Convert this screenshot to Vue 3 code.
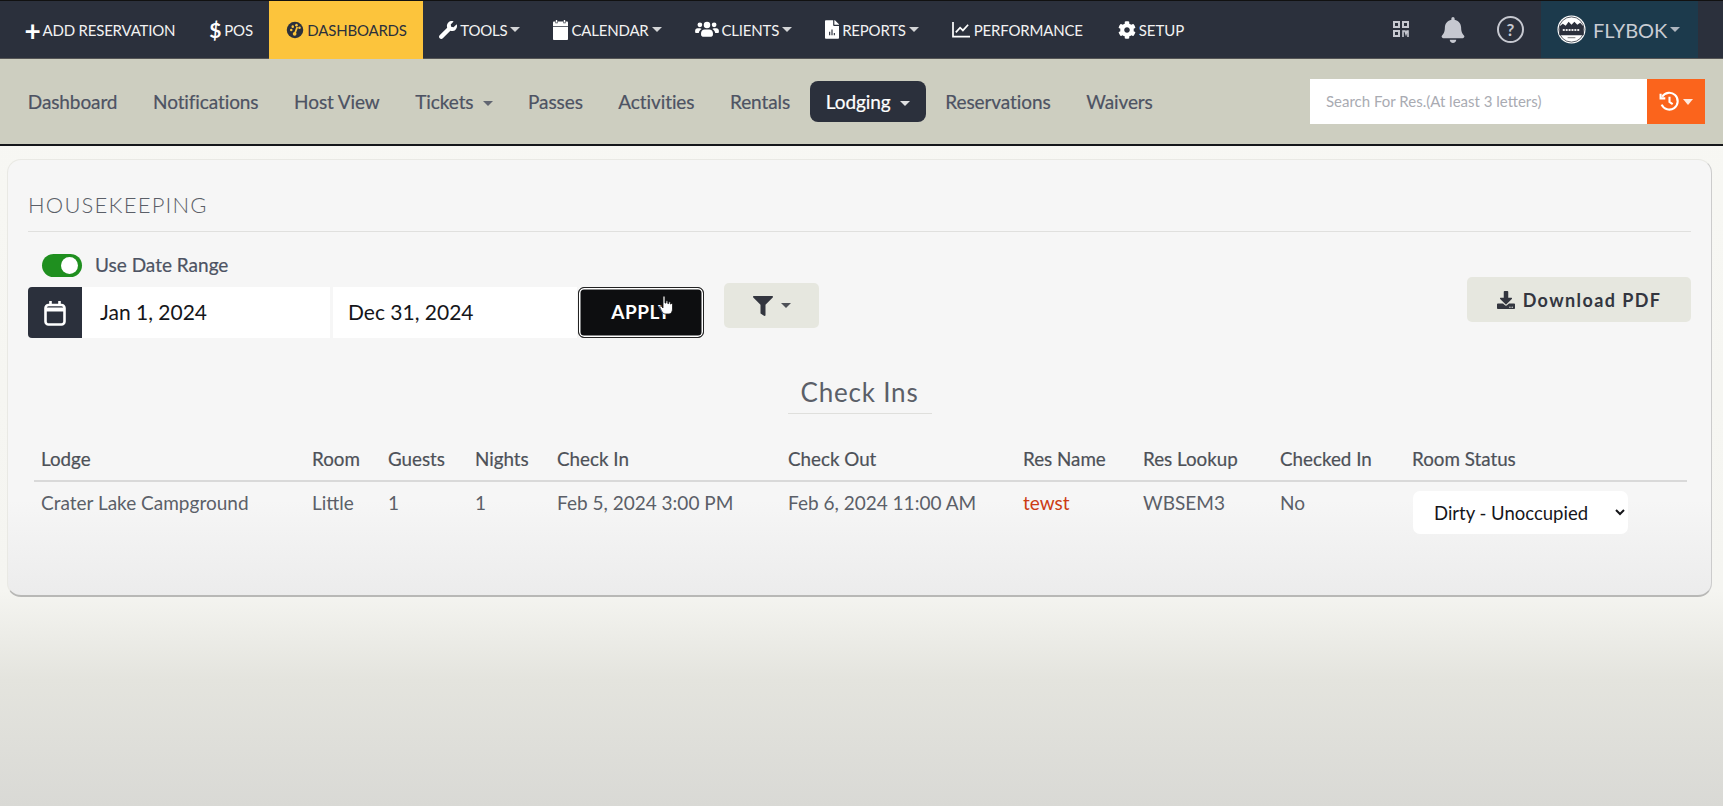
<script setup>
import { ref } from 'vue'

const useRange = ref(true)
const status = ref('Dirty - Unoccupied')

const paths = {
  wrench: 'M507.73 109.1c-2.24-9.03-13.54-12.09-20.12-5.51l-74.36 74.36-67.88-11.31-11.31-67.88 74.36-74.36c6.62-6.62 3.43-17.9-5.66-20.16-47.38-11.74-99.55.91-136.58 37.93-39.64 39.64-50.55 97.1-34.05 147.2L18.74 402.76c-24.99 24.99-24.99 65.51 0 90.5 24.99 24.99 65.51 24.99 90.5 0l213.21-213.21c50.12 16.71 107.47 5.68 147.37-34.22 37.07-37.07 49.7-89.32 37.91-136.73z',
  calendar: 'M96 0h48v64H96zM368 0h48v64h-48zM32 40h48v40h80V40h192v40h80V40h48c18 0 32 14 32 32v84H0V72c0-18 14-32 32-32zM0 172h512v308c0 18-14 32-32 32H32c-18 0-32-14-32-32z',
  users: 'M128 64a64 64 0 1 1 0 128 64 64 0 0 1 0-128zM512 64a64 64 0 1 1 0 128 64 64 0 0 1 0-128zM320 48a88 88 0 1 1 0 176 88 88 0 0 1 0-176zM64 224h64c18 0 34 7 46 19-40 22-69 62-75 109H32c-18 0-32-14-32-32v-32c0-35 29-64 64-64zM512 224h64c35 0 64 29 64 64v32c0 18-14 32-32 32h-67c-6-47-35-87-75-109 12-12 28-19 46-19zM256 256h128c53 0 96 43 96 96v48c0 26-22 48-48 48H208c-26 0-48-22-48-48v-48c0-53 43-96 96-96z',
  report: 'M224 136V0H24C10.700 0 0 10.700 0 24v464c0 13.300 10.700 24 24 24h336c13.300 0 24-10.700 24-24V160H248c-13.200 0-24-10.800-24-24zM144 416h-32v-96h32zm64 0h-32V256h32zm64 0h-32v-64h32zM384 122v6H256V0h6c6.400 0 12.500 2.500 17 7l98 98c4.500 4.500 7 10.600 7 17z',
  cog: 'M487.4 315.7l-42.6-24.6c4.3-23.2 4.3-47 0-70.2l42.6-24.6c4.9-2.8 7.1-8.6 5.5-14-11.1-35.6-30-67.8-54.7-94.6-3.8-4.1-10-5.1-14.8-2.3L380.8 110c-17.9-15.4-38.5-27.3-60.8-35.1V25.8c0-5.6-3.9-10.5-9.4-11.7-36.7-8.2-74.3-7.8-109.2 0-5.5 1.2-9.4 6.1-9.4 11.7V75c-22.2 7.9-42.8 19.8-60.8 35.1L88.7 85.5c-4.9-2.8-11-1.9-14.8 2.3-24.7 26.7-43.6 58.9-54.7 94.6-1.7 5.4.6 11.2 5.5 14L67.3 221c-4.3 23.2-4.3 47 0 70.2l-42.6 24.6c-4.9 2.8-7.1 8.6-5.5 14 11.1 35.6 30 67.8 54.7 94.6 3.8 4.1 10 5.1 14.8 2.3l42.6-24.6c17.9 15.4 38.5 27.3 60.8 35.1v49.2c0 5.6 3.9 10.5 9.4 11.7 36.7 8.2 74.3 7.8 109.2 0 5.5-1.2 9.4-6.1 9.4-11.7v-49.2c22.2-7.9 42.8-19.8 60.8-35.1l42.6 24.6c4.9 2.8 11 1.9 14.8-2.3 24.7-26.7 43.6-58.9 54.7-94.6 1.5-5.5-.7-11.3-5.6-14.1zM256 336c-44.1 0-80-35.9-80-80s35.9-80 80-80 80 35.9 80 80-35.9 80-80 80z',
  bell: 'M224 512c35.32 0 63.97-28.65 63.97-64H160.03c0 35.35 28.65 64 63.97 64zm215.39-149.71c-19.32-20.76-55.47-51.99-55.47-154.29 0-77.7-54.48-139.9-127.94-155.16V32c0-17.67-14.32-32-31.98-32s-31.98 14.33-31.98 32v20.84C118.56 68.1 64.08 130.3 64.08 208c0 102.3-36.15 133.53-55.47 154.29-6 6.45-8.66 14.16-8.61 21.71.11 16.4 12.98 32 32.1 32h383.8c19.12 0 32-15.6 32.1-32 .05-7.55-2.61-15.27-8.61-21.71z',
  filter: 'M487.976 0H24.028C2.71 0-8.047 25.866 7.058 40.971L192 225.941V432c0 7.831 3.821 15.17 10.237 19.662l80 55.98C298.02 518.69 320 507.493 320 487.98V225.941l184.947-184.97C520.021 25.896 509.338 0 487.976 0z',
  download: 'M216 0h80c13.3 0 24 10.7 24 24v168h87.7c17.8 0 26.7 21.5 14.1 34.1L269.7 378.3c-7.5 7.5-19.8 7.5-27.3 0L90.1 226.1c-12.6-12.6-3.7-34.1 14.1-34.1H192V24c0-13.3 10.7-24 24-24zm296 376v112c0 13.3-10.7 24-24 24H24c-13.3 0-24-10.7-24-24V376c0-13.3 10.7-24 24-24h146.7l49 49c20.1 20.1 52.5 20.1 72.6 0l49-49H488c13.3 0 24 10.7 24 24zm-124 88c0-11-9-20-20-20s-20 9-20 20 9 20 20 20 20-9 20-20zm64 0c0-11-9-20-20-20s-20 9-20 20 9 20 20 20 20-9 20-20z'
}

const subLinks = [
  { label: 'Dashboard' },
  { label: 'Notifications' },
  { label: 'Host View' },
  { label: 'Tickets', caret: true },
  { label: 'Passes' },
  { label: 'Activities' },
  { label: 'Rentals' },
  { label: 'Lodging', caret: true, active: true },
  { label: 'Reservations' },
  { label: 'Waivers' }
]

// column widths measured off the reference
const columns = [
  { label: 'Lodge', width: 271 },
  { label: 'Room', width: 76 },
  { label: 'Guests', width: 87 },
  { label: 'Nights', width: 82 },
  { label: 'Check In', width: 231 },
  { label: 'Check Out', width: 235 },
  { label: 'Res Name', width: 120 },
  { label: 'Res Lookup', width: 137 },
  { label: 'Checked In', width: 132 },
  { label: 'Room Status', width: 282 }
]
</script>

<template>
  <div class="page">
    <header class="topbar">
      <nav class="mainnav">
        <a class="item first"><span class="plus">+</span>ADD RESERVATION</a>
        <a class="item"><span class="dollar">$</span>POS</a>
        <a class="item active">
          <svg class="ic" viewBox="0 0 24 24" width="18" height="18">
            <circle cx="12" cy="12" r="11" fill="#2b303c" />
            <circle cx="7" cy="12" r="1.7" fill="#fcc43c" />
            <circle cx="9" cy="7.500" r="1.700" fill="#fcc43c" />
            <circle cx="14" cy="5.500" r="1.700" fill="#fcc43c" />
            <circle cx="18" cy="9" r="1.700" fill="#fcc43c" />
            <path d="M15 8l-3 8" stroke="#fcc43c" stroke-width="2.400" />
            <circle cx="11.500" cy="17" r="2.500" fill="#fcc43c" />
          </svg>
          DASHBOARDS
        </a>
        <a class="item">
          <svg class="ic" viewBox="0 0 512 512" width="18" height="18"><path :d="paths.wrench" fill="#fff" /></svg>
          TOOLS<i class="caret"></i>
        </a>
        <a class="item">
          <svg class="ic" viewBox="0 0 512 512" width="15" height="20" preserveAspectRatio="none"><path :d="paths.calendar" fill="#fff" /></svg>
          CALENDAR<i class="caret"></i>
        </a>
        <a class="item">
          <svg class="ic" viewBox="0 0 640 512" width="24" height="19"><path :d="paths.users" fill="#fff" /></svg>
          CLIENTS<i class="caret"></i>
        </a>
        <a class="item">
          <svg class="ic" viewBox="0 0 384 512" width="14" height="19"><path :d="paths.report" fill="#fff" /></svg>
          REPORTS<i class="caret"></i>
        </a>
        <a class="item">
          <svg class="ic" viewBox="0 0 20 18" width="19" height="17">
            <path d="M1 1v15.500h18" fill="none" stroke="#fff" stroke-width="1.800" />
            <path d="M4 12l4.500-5 3 3L17 4" fill="none" stroke="#fff" stroke-width="1.800" />
          </svg>
          PERFORMANCE
        </a>
        <a class="item setup">
          <svg class="ic" viewBox="0 0 512 512" width="18" height="18"><path :d="paths.cog" fill="#fff" /></svg>
          SETUP
        </a>
      </nav>
      <div class="tools">
        <svg class="qr" viewBox="0 0 16 17" width="16" height="17" fill="none" stroke="#c6c8d0" stroke-width="2">
          <rect x="1" y="1" width="5" height="5" />
          <rect x="10" y="1" width="5" height="5" />
          <rect x="1" y="10" width="5" height="5" />
          <path d="M10 16v-6h2l1 3 1-3h1v6" stroke-width="1.600" />
        </svg>
        <svg class="bell" viewBox="0 0 448 512" width="24" height="26"><path :d="paths.bell" fill="#c6c8d0" /></svg>
        <span class="help">?</span>
        <div class="account">
          <svg viewBox="0 0 30 30" width="29" height="29">
            <circle cx="15" cy="15" r="14.500" fill="#fff" />
            <circle cx="15" cy="15" r="13" fill="none" stroke="#2b303c" stroke-width=".8" />
            <path d="M2.500 12l3.500-3 3 2 3-4 3 3 3-3 3 3 3-2 3.500 4v9h-25z" fill="#2b303c" />
            <path d="M6 15.500h18" stroke="#e8e8e8" stroke-width="2" stroke-dasharray="2 1" />
            <path d="M11 23.500h8" stroke="#777" stroke-width="1" />
          </svg>
          <span>FLYBOK</span><i class="caret"></i>
        </div>
      </div>
    </header>

    <div class="subnav">
      <nav class="sublinks">
        <a v-for="link in subLinks" :key="link.label" class="sublink" :class="{ on: link.active }">
          {{ link.label }}<i v-if="link.caret" class="caret big"></i>
        </a>
      </nav>
      <div class="search">
        <input type="text" placeholder="Search For Res.(At least 3 letters)" />
        <button class="history">
          <svg viewBox="0 0 20 20" width="21" height="21" fill="none" stroke="#fff" stroke-width="2">
            <path d="M3 5.500A8 8 0 1 1 2.500 13" />
            <path d="M1.500 2.500V7H6" />
            <path d="M10 5.500V10.500l3 2" />
          </svg>
          <i class="caret big"></i>
        </button>
      </div>
    </div>

    <main class="card">
      <h1 class="title">HOUSEKEEPING</h1>

      <div class="toolbar">
        <div class="range">
          <label class="switch-row" @click="useRange = !useRange">
            <span class="switch" :class="{ off: !useRange }"><span class="knob"></span></span>
            Use Date Range
          </label>
          <div class="dates">
            <span class="cal">
              <svg viewBox="0 0 22 26" width="22" height="26" fill="none" stroke="#fff" stroke-width="2.600">
                <rect x="1.500" y="5" width="19" height="19.500" rx="3" />
                <path d="M1.500 9.500h19" stroke-width="4" />
                <path d="M6.500 1v5M15.500 1v5" />
              </svg>
            </span>
            <input class="date one" type="text" value="Jan 1, 2024" />
            <input class="date two" type="text" value="Dec 31, 2024" />
            <button class="apply">
              APPLY
              <svg class="hand" viewBox="0 0 14 20" width="14" height="20">
                <path d="M4 2c0-1.300 2-1.300 2 0v6l1 .1V6.500c0-1 1.800-1 1.800 0V8.500l.9.1V7.500c0-1 1.700-1 1.700 0v1.500l.6.100c0-.8 1.500-.8 1.500.2V14c0 2.500-1.500 5-3.500 5H6c-1.500 0-2.500-1.500-3.500-3L.8 12.500c-.6-1.300.9-2.200 1.700-1L4 13z" fill="#fff" stroke="#111" stroke-width=".8" />
              </svg>
            </button>
          </div>
        </div>
        <button class="filter">
          <svg viewBox="0 0 512 512" width="20" height="20"><path :d="paths.filter" fill="#33363f" /></svg>
          <i class="caret dark"></i>
        </button>
        <button class="pdf">
          <svg viewBox="0 0 512 512" width="18" height="18"><path :d="paths.download" fill="#33363f" /></svg>
          Download PDF
        </button>
      </div>

      <h2 class="section">Check Ins</h2>

      <table class="grid">
        <colgroup>
          <col v-for="c in columns" :key="c.label" :style="{ width: c.width + 'px' }" />
        </colgroup>
        <thead>
          <tr>
            <th v-for="c in columns" :key="c.label">{{ c.label }}</th>
          </tr>
        </thead>
        <tbody>
          <tr>
            <td>Crater Lake Campground</td>
            <td>Little</td>
            <td>1</td>
            <td>1</td>
            <td>Feb 5, 2024 3:00 PM</td>
            <td>Feb 6, 2024 11:00 AM</td>
            <td><a class="res">tewst</a></td>
            <td>WBSEM3</td>
            <td>No</td>
            <td>
              <select v-model="status" class="status">
                <option>Dirty - Unoccupied</option>
                <option>Clean - Unoccupied</option>
                <option>Occupied</option>
              </select>
            </td>
          </tr>
        </tbody>
      </table>
    </main>
  </div>
</template>

<style scoped>
.page {
  height: 806px;
  overflow: hidden;
  font-family: Lato, "Open Sans", sans-serif;
  background: linear-gradient(#f8f8f4 0, #f5f5f1 590px, #e4e4de 680px, #d9d9d5 806px);
}
.topbar {
  height: 59px;
  display: flex;
  justify-content: space-between;
  background: #2b303c;
  border-top: 1px solid #111;
  box-sizing: border-box;
  border-bottom: 1px solid #555;
}
.mainnav {
  display: flex;
  padding-left: 8px;
}
.item {
  display: flex;
  align-items: center;
  padding: 0 16.500px;
  color: #f2f2f2;
  font-size: 15px;
  letter-spacing: -0.2px;
  white-space: nowrap;
}
.item.first {
  padding-right: 17.500px;
}
.item.active {
  background: #fcc43c;
  color: #2b303c;
  padding: 0 16px 0 17px;
  margin: 0 0 -1px;
}
.item.setup {
  padding-left: 18.500px;
  letter-spacing: 0;
}
.plus {
  font-size: 28px;
  font-weight: 700;
  color: #fff;
  margin-right: 2px;
  line-height: 1;
}
.dollar {
  font-size: 21px;
  font-weight: 700;
  color: #fff;
  margin-right: 3px;
}
.ic {
  margin-right: 3px;
  flex: none;
}
.caret {
  display: inline-block;
  width: 0;
  height: 0;
  margin-left: 3px;
  border-top: 5px solid currentColor;
  border-left: 5px solid transparent;
  border-right: 5px solid transparent;
  opacity: .85;
}
.caret.big {
  margin-left: 9px;
  vertical-align: 3px;
}
.caret.dark {
  color: #33363f;
  margin-left: 8px;
}
.tools {
  display: flex;
  align-items: center;
  padding-right: 25px;
}
.qr {
  margin-right: 32px;
}
.bell {
  margin-right: 32px;
}
.help {
  width: 23px;
  height: 23px;
  border: 2px solid #c6c8d0;
  border-radius: 50%;
  color: #c6c8d0;
  font-size: 17px;
  font-weight: 700;
  text-align: center;
  line-height: 23px;
  margin-right: 17px;
}
.account {
  width: 157px;
  height: 100%;
  box-sizing: border-box;
  padding-left: 16px;
  display: flex;
  align-items: center;
  background: #1c3a4c;
  color: #c9ccd3;
  font-size: 20px;
}
.account svg {
  margin-right: 7px;
}
.subnav {
  height: 87px;
  display: flex;
  justify-content: space-between;
  align-items: center;
  box-sizing: border-box;
  padding: 0 18px 0 10px;
  background: #cdcec0;
  border-bottom: 2px solid #15161a;
}
.sublinks {
  display: flex;
  align-items: center;
}
.sublink {
  height: 41px;
  box-sizing: border-box;
  padding: 0 17.800px;
  color: #4d5363;
  font-size: 19px;
  line-height: 41px;
  border-radius: 8px;
  letter-spacing: -0.1px;
  -webkit-text-stroke: .2px currentColor;
  white-space: nowrap;
}
.sublink.on {
  background: #2b303c;
  color: #fff;
  padding: 0 16px;
  margin: 0 2px;
}
.search {
  display: flex;
  height: 45px;
}
.search input {
  width: 337px;
  box-sizing: border-box;
  border: 0;
  outline: 0;
  padding: 0 16px 2px;
  background: #fff;
  font: 15px Lato, sans-serif;
}
.search input::placeholder {
  color: #a9abb2;
}
.history {
  width: 58px;
  border: 0;
  background: #fb641c;
  color: #fff;
  display: flex;
  align-items: center;
  justify-content: center;
  padding: 0;
}
.history .caret {
  margin-left: 3px;
  border-top-width: 6px;
}
.card {
  margin: 13px 11px 0 7px;
  height: 438px;
  box-sizing: border-box;
  padding: 33px 20px 0;
  background: linear-gradient(#f6f6f6 0, #f6f6f6 340px, #ececec 100%);
  border: 1px solid #e9e9e4;
  border-bottom: 2px solid #b8b8b6;
  border-right-color: #ccc;
  border-radius: 14px;
}
.title {
  margin: 0;
  padding-bottom: 14px;
  border-bottom: 1px solid #e0e0de;
  color: #5b5f68;
  font-size: 22px;
  font-weight: 300;
  letter-spacing: 1.200px;
  line-height: 24px;
}
.toolbar {
  display: flex;
  align-items: flex-start;
  margin-top: 21px;
}
.range {
  width: 676px;
}
.switch-row {
  display: flex;
  align-items: center;
  height: 24px;
  padding-left: 14px;
  color: #4d5363;
  font-size: 19px;
  line-height: 22px;
  -webkit-text-stroke: .2px currentColor;
  cursor: pointer;
}
.switch {
  width: 40px;
  height: 23px;
  border-radius: 12px;
  background: #1f8f1f;
  margin-right: 13px;
  position: relative;
}
.switch.off {
  background: #aaa;
}
.knob {
  position: absolute;
  right: 4px;
  top: 3px;
  width: 17px;
  height: 17px;
  border-radius: 50%;
  background: #fff;
}
.dates {
  display: flex;
  height: 51px;
  margin-top: 10px;
}
.cal {
  width: 54px;
  flex: none;
  display: flex;
  align-items: center;
  justify-content: center;
  background: #2b303c;
  border-radius: 4px 0 0 4px;
}
.date {
  box-sizing: border-box;
  border: 0;
  outline: 0;
  background: #fff;
  color: #15161a;
  font: 21px Lato, sans-serif;
  padding: 0 17px 3px 18px;
  height: 100%;
  min-width: 0;
}
.date.one {
  width: 248px;
  margin-right: 3px;
}
.date.two {
  width: 244px;
  padding-left: 15px;
}
.apply {
  position: relative;
  flex: 1;
  margin-left: 1px;
  border: 1px solid #222;
  box-shadow: inset 0 0 0 1.500px #fff;
  border-radius: 6px;
  background: #0d0e10;
  color: #fff;
  font: 700 19px Lato, sans-serif;
  letter-spacing: .5px;
  padding: 0 0 3px;
}
.hand {
  position: absolute;
  left: 80px;
  top: 7px;
}
.filter {
  margin: 30px 0 0 20px;
  width: 95px;
  height: 45px;
  border: 0;
  border-radius: 5px;
  background: #e6e7df;
  display: flex;
  align-items: center;
  justify-content: center;
  padding: 0;
}
.pdf {
  margin: 24px 0 0 auto;
  width: 224px;
  height: 45px;
  border: 0;
  border-radius: 5px;
  background: #e6e7df;
  color: #33363f;
  font: 700 18px Lato, sans-serif;
  letter-spacing: 1.400px;
  display: flex;
  align-items: center;
  justify-content: center;
  gap: 8px;
}
.section {
  width: 144px;
  margin: 38px auto 0;
  padding-bottom: 5px;
  border-bottom: 1px solid #dfdfdc;
  color: #5b5f68;
  font-size: 26px;
  font-weight: 400;
  letter-spacing: .8px;
  text-align: center;
  line-height: 32px;
  white-space: nowrap;
}
.grid {
  table-layout: fixed;
  width: 1653px;
  margin: 24px 0 0 6px;
  border-collapse: collapse;
}
.grid th {
  padding: 9px 7px 10px;
  border-bottom: 2px solid #d9d9d9;
  color: #4d5158;
  font-size: 18.800px;
  font-weight: 400;
  -webkit-text-stroke: .2px currentColor;
  text-align: left;
  white-space: nowrap;
}
.grid td {
  padding: 9px 7px;
  vertical-align: top;
  color: #5b5f68;
  font-size: 19px;
  white-space: nowrap;
}
.res {
  color: #cc3c14;
}
.status {
  width: 215px;
  height: 43px;
  margin: 0 0 0 1px;
  padding: 0 0 0 17px;
  border: 0;
  outline: 0;
  border-radius: 7px;
  background: #fff;
  color: #15161a;
  font: 18.500px Lato, sans-serif;
}
</style>

<style>
html, body {
  margin: 0;
  background: #f5f5f1;
}
</style>
